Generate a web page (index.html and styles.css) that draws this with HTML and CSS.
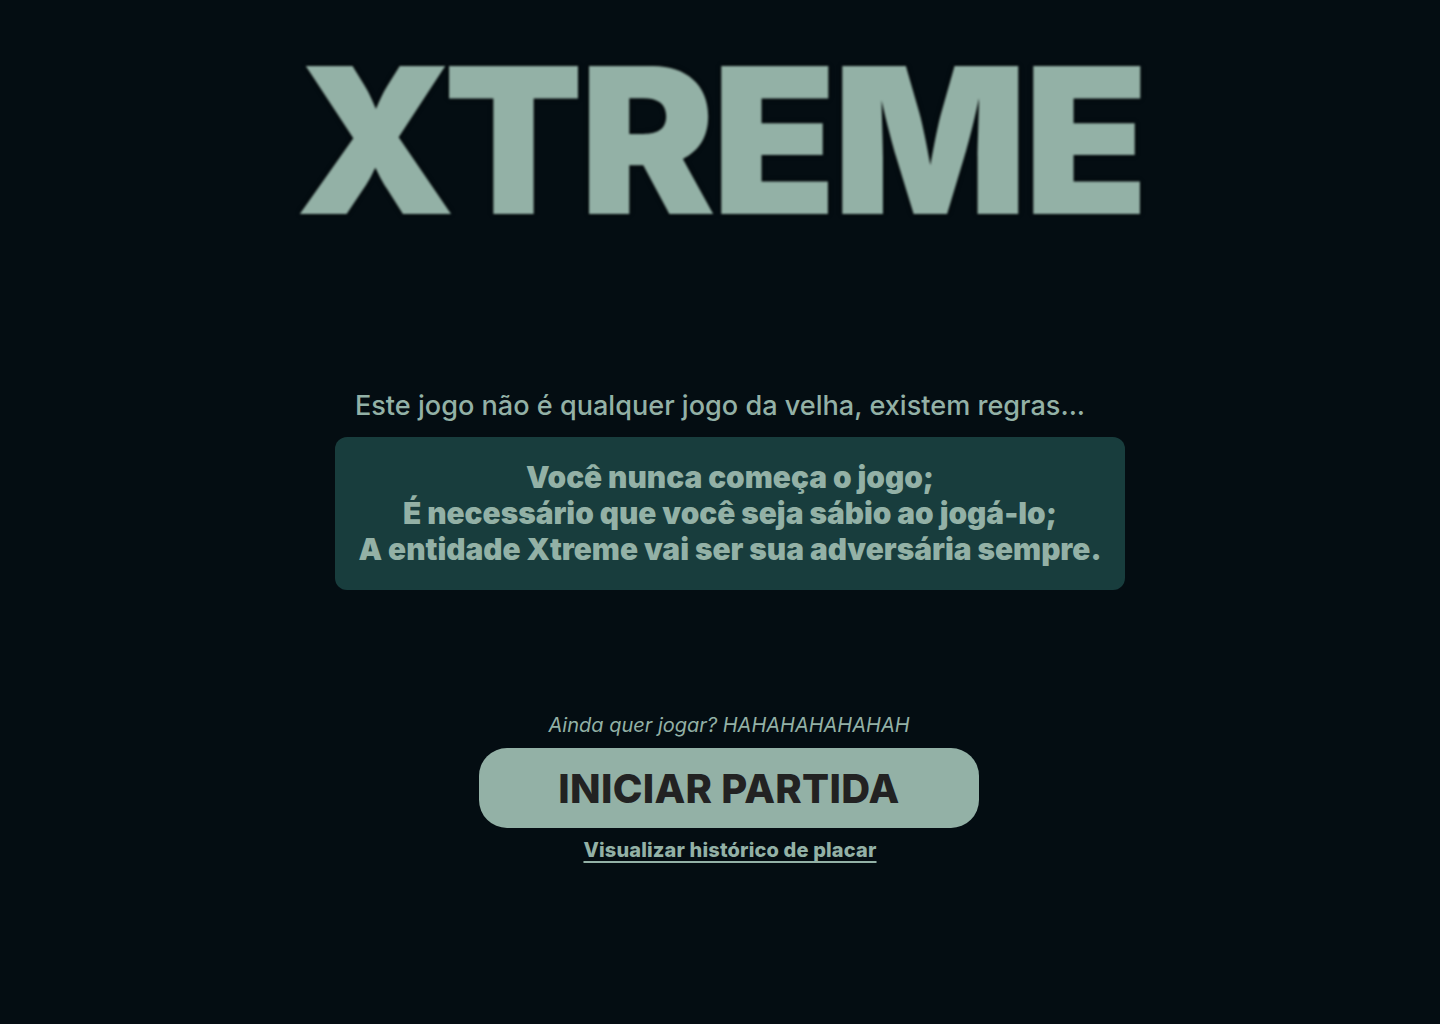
FILE: index.html
```html
<!DOCTYPE html>
<html lang="pt-BR">
<head>
<meta charset="utf-8">
<title>XTREME</title>
<link rel="stylesheet" href="styles.css">
</head>
<body>
<main class="page">
  <h1 class="title">XTREME</h1>
  <section class="rules">
    <p class="intro">Este jogo não é qualquer jogo da velha, existem regras...</p>
    <div class="rules-box">
      <p>Você nunca começa o jogo;</p>
      <p>É necessário que você seja sábio ao jogá-lo;</p>
      <p>A entidade Xtreme vai ser sua adversária sempre.</p>
    </div>
  </section>
  <section class="start">
    <p class="tease">Ainda quer jogar? HAHAHAHAHAHAH</p>
    <button class="start-btn">INICIAR PARTIDA</button>
    <a class="history" href="#">Visualizar histórico de placar</a>
  </section>
</main>
</body>
</html>
```
FILE: styles.css
```css
* { box-sizing: border-box; }
html, body {
  margin: 0;
  padding: 0;
  background: #040d12;
  height: 100%;
}
body {
  font-family: Inter, "Noto Sans", sans-serif;
  color: #93b1a6;
}
.page {
  display: flex;
  flex-direction: column;
  align-items: center;
  min-height: 1024px;
}
.title {
  margin: 28px 0 0;
  font-size: 204px;
  font-weight: 900;
  line-height: 1.1;
  letter-spacing: -4px;
  color: #93b1a6;
  text-shadow: 0 0 4px rgba(0, 0, 0, 0.9);
  filter: blur(0.9px);
}
.rules {
  display: flex;
  flex-direction: column;
  align-items: center;
  margin-top: 139px;
}
.intro {
  margin: 0;
  font-size: 27.1px;
  font-weight: 500;
  line-height: 30px;
}
.rules-box {
  margin-top: 16px;
  margin-left: 20px;
  width: 790px;
  padding: 22px 0 23px;
  background: #183d3d;
  border-radius: 12px;
  text-align: center;
}
.rules-box p {
  margin: 0;
  font-size: 29.8px;
  font-weight: 900;
  line-height: 36px;
}
.start {
  display: flex;
  flex-direction: column;
  align-items: center;
  margin-top: 123px;
  margin-left: 18px;
}
.tease {
  margin: 0;
  font-size: 20px;
  font-style: italic;
  line-height: 24px;
}
.start-btn {
  margin-top: 11px;
  width: 500px;
  height: 80px;
  border: none;
  border-radius: 28px;
  background: #93b1a6;
  color: #222;
  font-family: Inter, "Noto Sans", sans-serif;
  font-size: 40px;
  font-weight: 800;
  letter-spacing: 0.3px;
  cursor: pointer;
}
.history {
  margin-top: 10px;
  margin-left: 2px;
  font-size: 20px;
  font-weight: 800;
  letter-spacing: 0.15px;
  color: #93b1a6;
  text-decoration: underline;
  text-underline-offset: 4px;
}
```
